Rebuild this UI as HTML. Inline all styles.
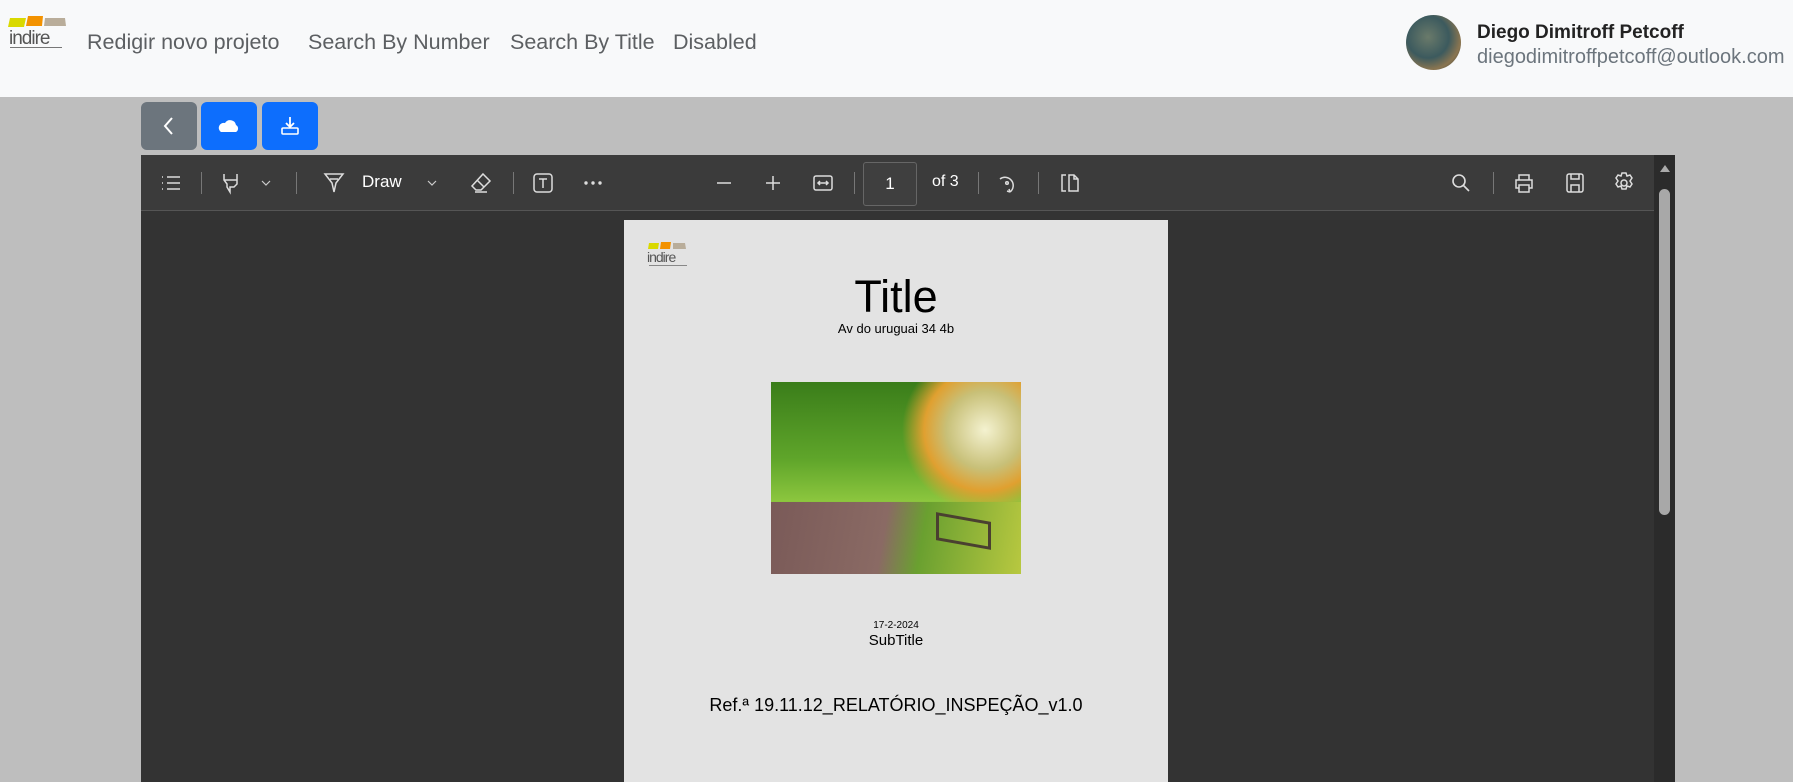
<!DOCTYPE html>
<html><head><meta charset="utf-8"><style>
*{margin:0;padding:0;box-sizing:border-box}
body{width:1793px;height:782px;overflow:hidden;background:#bebebe;font-family:"Liberation Sans",sans-serif;position:relative}
.hdr{position:absolute;left:0;top:0;width:1793px;height:97px;background:#f8f9fa}
.nav{position:absolute;top:30px;font-size:21.5px;color:#5c5f62;white-space:nowrap}
.abs{position:absolute}
.btn{position:absolute;top:102px;height:48px;border-radius:6px;display:flex;align-items:center;justify-content:center}
.viewer{position:absolute;left:141px;top:155px;width:1534px;height:627px;background:#333}
.tb{position:absolute;left:0;top:0;width:1513px;height:56px;background:#3b3b3b;border-bottom:1px solid #555}
.ic{position:absolute;top:16px}
.sep{position:absolute;top:17px;width:1px;height:22px;background:#777}
.page{position:absolute;left:624px;top:220px;width:544px;height:562px;background:#e3e3e3;text-align:center;color:#000}
</style></head><body>
<div class="hdr">
  <svg class="abs" style="left:6px;top:14px" width="70" height="40" viewBox="0 0 70 40">
    <path d="M4 4 h16 l-2 9 h-16z" fill="#d9d900"/><path d="M22 2 h15 l-1 10 h-16z" fill="#f39200"/><path d="M39 4 h20 l1 8 h-22z" fill="#b9ad9a"/>
    <text x="3" y="30" font-family="Liberation Sans" font-size="19" fill="#555" letter-spacing="-1">indire</text>
    <rect x="4" y="33" width="52" height="1" fill="#777"/>
  </svg>
  <div class="nav" style="left:87px">Redigir novo projeto</div>
  <div class="nav" style="left:308px">Search By Number</div>
  <div class="nav" style="left:510px">Search By Title</div>
  <div class="nav" style="left:673px">Disabled</div>
  <div class="abs" style="left:1406px;top:15px;width:55px;height:55px;border-radius:50%;background:radial-gradient(circle at 40% 40%,#6a7a6a,#3c5a5e 45%,#8a7550 70%,#2d3a3a)"></div>
  <div class="abs" style="left:1477px;top:22px;font-size:19px;font-weight:bold;color:#222">Diego Dimitroff Petcoff</div>
  <div class="abs" style="left:1477px;top:46px;font-size:20px;color:#6c757d">diegodimitroffpetcoff@outlook.com</div>
</div>
<div class="btn" style="left:141px;width:56px;background:#6c757d"><svg width="16" height="22" viewBox="0 0 16 22"><path d="M11 3 L4 11 L11 19" stroke="#fff" stroke-width="2" fill="none"/></svg></div>
<div class="btn" style="left:201px;width:56px;background:#0d6efd"><svg width="22" height="16" viewBox="0 0 22 16"><path d="M3 14 h15 a4 4 0 0 0 0-7 a6 6 0 0 0-11-2 a5 5 0 0 0-4 9z" fill="#fff"/></svg></div>
<div class="btn" style="left:262px;width:56px;background:#0d6efd"><svg width="22" height="22" viewBox="0 0 22 22"><path d="M11 2 v9 M7 8 l4 4 l4-4" stroke="#fff" stroke-width="1.8" fill="none"/><rect x="3" y="13" width="16" height="6" rx="1" stroke="#fff" stroke-width="1.6" fill="none"/></svg></div>
<div class="viewer">
  <div class="tb">
    <svg class="ic" style="left:18px" width="24" height="24" viewBox="0 0 24 24" stroke="#ddd" stroke-width="1.6" fill="none"><path d="M8 6h13M8 12h13M8 18h13M3 6h1M3 12h1M3 18h1"/></svg>
    <div class="sep" style="left:60px"></div>
    <svg class="ic" style="left:79px" width="24" height="24" viewBox="0 0 24 24" stroke="#ddd" stroke-width="1.5" fill="none"><path d="M4 3v6l3 4v3l3 5v-5h4l3-3V3M4 9h13"/></svg>
    <svg class="ic" style="left:118px" width="14" height="24" viewBox="0 0 14 24" stroke="#ccc" stroke-width="1.2" fill="none"><path d="M3 10l4 4l4-4"/></svg>
    <div class="sep" style="left:155px"></div>
    <svg class="ic" style="left:181px" width="24" height="24" viewBox="0 0 24 24" stroke="#ddd" stroke-width="1.5" fill="none"><path d="M3 3h18L14 12l-2 9l-2-9zM8 8h8"/></svg>
    <div class="abs" style="left:221px;top:17px;font-size:17px;color:#fff">Draw</div>
    <svg class="ic" style="left:284px" width="14" height="24" viewBox="0 0 14 24" stroke="#ccc" stroke-width="1.2" fill="none"><path d="M3 10l4 4l4-4"/></svg>
    <svg class="ic" style="left:328px" width="24" height="24" viewBox="0 0 24 24" stroke="#ddd" stroke-width="1.5" fill="none"><path d="M14 3l7 7l-9 9H7l-4-4zM8 9l7 7M6 21h12"/></svg>
    <div class="sep" style="left:372px"></div>
    <svg class="ic" style="left:390px" width="24" height="24" viewBox="0 0 24 24" stroke="#ddd" stroke-width="1.5" fill="none"><rect x="3" y="3" width="18" height="18" rx="3"/><path d="M8 8h8M12 8v9"/></svg>
    <svg class="ic" style="left:440px" width="24" height="24" viewBox="0 0 24 24" fill="#ddd"><circle cx="5" cy="12" r="1.7"/><circle cx="12" cy="12" r="1.7"/><circle cx="19" cy="12" r="1.7"/></svg>
    <svg class="ic" style="left:571px" width="24" height="24" viewBox="0 0 24 24" stroke="#ddd" stroke-width="1.5"><path d="M5 12h14"/></svg>
    <svg class="ic" style="left:620px" width="24" height="24" viewBox="0 0 24 24" stroke="#ddd" stroke-width="1.5"><path d="M5 12h14M12 5v14"/></svg>
    <svg class="ic" style="left:670px" width="24" height="24" viewBox="0 0 24 24" stroke="#ddd" stroke-width="1.5" fill="none"><rect x="3" y="5" width="18" height="14" rx="2"/><path d="M7 12h10M9 10l-2 2l2 2M15 10l2 2l-2 2"/></svg>
    <div class="sep" style="left:713px"></div>
    <div class="abs" style="left:722px;top:7px;width:54px;height:44px;border:1px solid #666;border-radius:3px;background:#3f3f3f;color:#fff;font-size:17px;text-align:center;line-height:42px">1</div>
    <div class="abs" style="left:791px;top:18px;font-size:16px;color:#fff">of 3</div>
    <div class="sep" style="left:837px"></div>
    <svg class="ic" style="left:854px" width="24" height="24" viewBox="0 0 24 24" stroke="#ddd" stroke-width="1.5" fill="none"><path d="M5 8a8 8 0 1 1 10 13M15 21l-3-1M15 21l-1-3"/><circle cx="12" cy="12" r="1.3"/></svg>
    <div class="sep" style="left:897px"></div>
    <svg class="ic" style="left:916px" width="24" height="24" viewBox="0 0 24 24" stroke="#ddd" stroke-width="1.5" fill="none"><path d="M12 4h5l4 4v12h-9zM17 4v4h4M9 4H5v16h4"/></svg>
    <svg class="ic" style="left:1308px" width="24" height="24" viewBox="0 0 24 24" stroke="#ddd" stroke-width="1.6" fill="none"><circle cx="10" cy="10" r="6"/><path d="M14.5 14.5L20 20"/></svg>
    <div class="sep" style="left:1352px"></div>
    <svg class="ic" style="left:1371px" width="24" height="24" viewBox="0 0 24 24" stroke="#ddd" stroke-width="1.5" fill="none"><path d="M7 9V4h10v5M7 17H4v-8h16v8h-3"/><rect x="7" y="14" width="10" height="7"/></svg>
    <svg class="ic" style="left:1422px" width="24" height="24" viewBox="0 0 24 24" stroke="#ddd" stroke-width="1.5" fill="none"><rect x="4" y="3" width="16" height="18" rx="2"/><path d="M8 3v5h8V3M8 21v-7h8v7"/></svg>
    <svg class="ic" style="left:1471px" width="24" height="24" viewBox="0 0 24 24" stroke="#ddd" stroke-width="1.5" fill="none"><circle cx="12" cy="12" r="3"/><path d="M10 2h4l1 3l3-1l2 3l-2 3l2 3l-2 3l-3-1l-1 3h-4l-1-3l-3 1l-2-3l2-3l-2-3l2-3l3 1z"/></svg>
  </div>
  <div class="abs" style="left:1513px;top:0;width:21px;height:627px;background:#2b2b2b"></div>
  <svg class="abs" style="left:1518px;top:8px" width="12" height="10"><path d="M1 9L6 2L11 9z" fill="#aaa"/></svg>
  <div class="abs" style="left:1518px;top:34px;width:11px;height:326px;border-radius:6px;background:#a8a8a8"></div>
</div>
<div class="page">
  <svg class="abs" style="left:22px;top:21px" width="50" height="30" viewBox="0 0 50 30">
    <path d="M3 2h10l-1 6H2z" fill="#d9d900"/><path d="M15 1h10l-1 7H14z" fill="#f39200"/><path d="M27 2h12l1 6H27z" fill="#b9ad9a"/>
    <text x="1" y="21" font-family="Liberation Sans" font-size="14" fill="#555" letter-spacing="-1">indire</text>
    <rect x="3" y="24" width="38" height="1" fill="#888"/>
  </svg>
  <div class="abs" style="left:0;width:544px;top:51px;font-size:45px">Title</div>
  <div class="abs" style="left:0;width:544px;top:101px;font-size:13px">Av do uruguai 34 4b</div>
  <div class="abs" style="left:147px;top:162px;width:250px;height:192px;overflow:hidden;background:linear-gradient(180deg,#3a7d1a 0%,#5fa52a 40%,#8cc63e 62%,#6b8e2a 70%,#6b5048 100%)">
    <div class="abs" style="left:130px;top:0;width:120px;height:120px;background:radial-gradient(circle at 70% 40%,#f4f2d0,#c8c078 35%,#e0a030 55%,transparent 75%)"></div>
    <div class="abs" style="left:0;top:120px;width:250px;height:72px;background:linear-gradient(100deg,#7a5a58 0%,#8a6a64 45%,#6aa030 60%,#b8c840 100%)"></div>
    <div class="abs" style="left:165px;top:135px;width:55px;height:28px;border:3px solid #4a4030;transform:skewY(10deg)"></div>
  </div>
  <div class="abs" style="left:0;width:544px;top:400px;font-size:10px">17-2-2024</div>
  <div class="abs" style="left:0;width:544px;top:412px;font-size:15px">SubTitle</div>
  <div class="abs" style="left:0;width:544px;top:475px;font-size:18px">Ref.ª 19.11.12_RELATÓRIO_INSPEÇÃO_v1.0</div>
</div>
</body></html>
